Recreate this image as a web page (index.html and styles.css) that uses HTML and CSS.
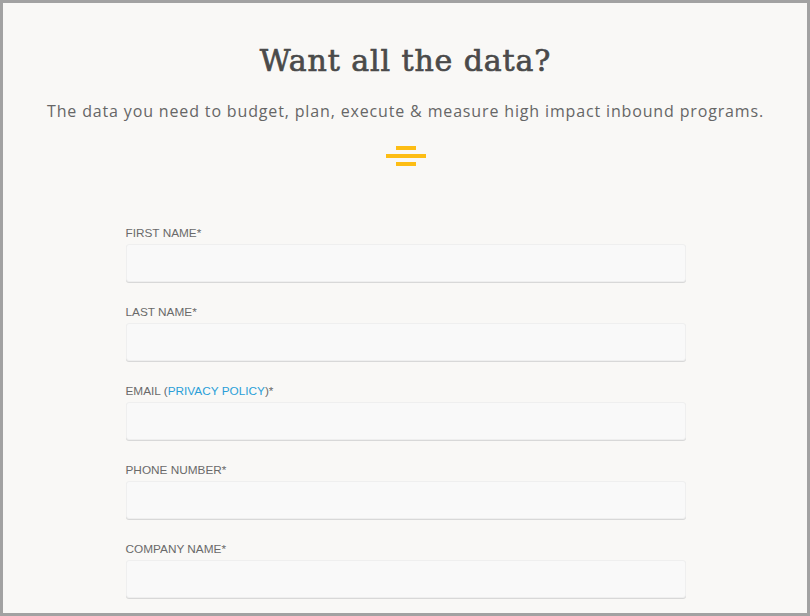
FILE: index.html
```html
<!DOCTYPE html>
<html>
<head>
<meta charset="utf-8">
<link rel="stylesheet" href="styles.css">
</head>
<body>
<div class="frame">
  <header class="intro">
    <h1 class="title">Want all the data?</h1>
    <p class="lead">The data you need to budget, plan, execute &amp; measure high impact inbound programs.</p>
    <div class="divider">
      <span class="bar short"></span>
      <span class="bar long"></span>
      <span class="bar short"></span>
    </div>
  </header>
  <form class="form">
    <div class="field">
      <label class="label">FIRST NAME*</label>
      <input class="input" type="text">
    </div>
    <div class="field">
      <label class="label">LAST NAME*</label>
      <input class="input" type="text">
    </div>
    <div class="field">
      <label class="label">EMAIL (<a class="link" href="#">PRIVACY POLICY</a>)*</label>
      <input class="input" type="text">
    </div>
    <div class="field">
      <label class="label">PHONE NUMBER*</label>
      <input class="input" type="text">
    </div>
    <div class="field">
      <label class="label">COMPANY NAME*</label>
      <input class="input" type="text">
    </div>
  </form>
</div>
</body>
</html>
```
FILE: styles.css
```css
html, body {
  margin: 0;
  padding: 0;
  background: #a2a2a2;
}
.frame {
  box-sizing: border-box;
  width: 810px;
  height: 616px;
  border: 3px solid #a2a2a2;
  padding-left: 1px;
  background: #f9f8f6;
  overflow: hidden;
}
.intro {
  display: flex;
  flex-direction: column;
  align-items: center;
  padding-top: 38px;
}
.title {
  margin: 0;
  font-family: "DejaVu Serif", serif;
  font-weight: normal;
  font-size: 30px;
  line-height: 40px;
  color: #4a4a4a;
  letter-spacing: 0.9px;
  -webkit-text-stroke: 0.7px #4a4a4a;
}
.lead {
  margin: 19px 0 0;
  font-family: "Open Sans", sans-serif;
  font-size: 16px;
  line-height: 22px;
  color: #666;
  letter-spacing: 0.85px;
}
.divider {
  margin-top: 24px;
  display: flex;
  flex-direction: column;
  align-items: center;
  gap: 4px;
}
.bar {
  display: block;
  height: 4px;
  background: #fdbd14;
}
.bar.short { width: 20px; }
.bar.long { width: 40px; }
.form {
  width: 560px;
  margin: 61px auto 0;
  display: flex;
  flex-direction: column;
  gap: 24px;
}
.field {
  display: flex;
  flex-direction: column;
}
.label {
  font-family: "Liberation Sans", Arial, sans-serif;
  font-size: 11.8px;
  line-height: 13px;
  color: #6a6a6a;
  margin-bottom: 4px;
}
.link {
  color: #2a9fd8;
  text-decoration: none;
}
.input {
  box-sizing: border-box;
  height: 38px;
  width: 560px;
  margin: 0;
  border: 1px solid #efefef;
  border-radius: 3px;
  background: #f9f9f9;
  box-shadow: 0 1px 0 #d8d8d8;
}
```
